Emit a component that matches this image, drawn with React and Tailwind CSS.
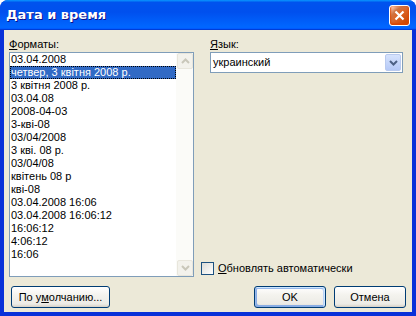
import React from 'react';

const formats = [
  '03.04.2008',
  'четвер, 3 квітня 2008 р.',
  '3 квітня 2008 р.',
  '03.04.08',
  '2008-04-03',
  '3-кві-08',
  '03/04/2008',
  '3 кві. 08 р.',
  '03/04/08',
  'квітень 08 р',
  'кві-08',
  '03.04.2008 16:06',
  '03.04.2008 16:06:12',
  '16:06:12',
  '4:06:12',
  '16:06',
];

// XP style push button
const XpButton = ({ children, primary, className = '' }) => (
  <button
    className={`h-[22px] rounded-[3px] border border-[#003c74] bg-[linear-gradient(to_bottom,#ffffff_0%,#f4f3ee_40%,#ecebe6_85%,#d6d0c5_100%)] text-black text-[11px] font-normal leading-none flex items-center justify-center ${
      primary ? 'shadow-[inset_-1px_1px_#cee7ff,inset_1px_2px_#98b8ea,inset_-2px_2px_#bcd4f6,inset_1px_-1px_#89ade4,inset_2px_-2px_#89ade4]' : ''
    } ${className}`}
  >
    {children}
  </button>
);

const ScrollBtn = ({ up }) => (
  <div className="w-[16px] h-[16px] rounded-[2px] border border-[#e8e6dc] bg-[#f3f2ec] flex items-center justify-center">
    <svg width="9" height="6" viewBox="0 0 9 6">
      <path
        d={up ? 'M1 5 L4.5 1.5 L8 5' : 'M1 1 L4.5 4.5 L8 1'}
        fill="none"
        stroke="#c9c7ba"
        strokeWidth="2"
      />
    </svg>
  </div>
);

export default function App() {
  return (
    <div className="w-[416px] h-[316px] flex flex-col rounded-t-[8px] overflow-hidden bg-[#0831d9] font-['Liberation_Sans',Arial,sans-serif] text-[11px] text-black">
      {/* TITLE BAR */}
      <div className="h-[30px] shrink-0 flex items-center pl-[6px] pr-[6px] bg-[linear-gradient(to_bottom,#0997ff_0%,#0053ee_8%,#0050ee_40%,#0066ff_88%,#0066ff_93%,#005bff_95%,#003dd7_96%,#003dd7_100%)]">
        <span className="text-white font-bold text-[13px] font-['DejaVu_Sans',sans-serif] [text-shadow:1px_1px_#0f1089] flex-1">Дата и время</span>
        <div className="w-[21px] h-[21px] rounded-[3px] border border-white bg-[radial-gradient(circle_at_90%_90%,#cc4600_0%,#dc6527_55%,#cd7546_70%,#ffccb2_90%,#ffffff_100%)] shadow-[inset_0_-1px_2px_1px_#da4600] flex items-center justify-center">
          <svg width="11" height="11" viewBox="0 0 11 11">
            <path d="M1.5 1.5 L9.5 9.5 M9.5 1.5 L1.5 9.5" stroke="white" strokeWidth="2.2" />
          </svg>
        </div>
      </div>

      {/* WINDOW FRAME */}
      <div className="flex-1 flex px-[4px] pb-[4px] bg-[#0831d9]">
        <div className="flex-1 flex flex-col bg-[#ece9d8] pt-[8px]">
          <div className="flex">
            {/* FORMATS */}
            <div className="ml-[5px] w-[185px] flex flex-col">
              <div className="h-[13px] leading-[13px]">
                <span className="underline">Ф</span>орматы:
              </div>
              <div className="mt-[1px] h-[225px] border border-[#7f9db9] bg-white flex">
                <div className="flex-1 flex flex-col">
                  {formats.map((f, i) => (
                    <div
                      key={f}
                      className={`h-[13px] leading-[13px] pl-[1px] whitespace-nowrap ${
                        i === 1 ? 'bg-[#316ac5] text-white outline-1 outline-dotted outline-[#000] -outline-offset-1' : ''
                      }`}
                    >
                      {f}
                    </div>
                  ))}
                </div>
                <div className="w-[17px] bg-[#fbfbf8] flex flex-col justify-between pl-[1px]">
                  <ScrollBtn up />
                  <ScrollBtn />
                </div>
              </div>
            </div>

            {/* LANGUAGE */}
            <div className="ml-[7px] w-[202px] flex flex-col">
              <div className="pl-[9px] h-[13px] leading-[13px]">
                <span className="underline">Я</span>зык:
              </div>
              <div className="ml-[9px] mt-[1px] h-[21px] border border-[#7f9db9] bg-white flex items-center pl-[2px] pr-[1px]">
                <span className="flex-1 text-[11px]">украинский</span>
                <div className="w-[16px] h-[17px] rounded-[2px] border border-[#b9caef] bg-[linear-gradient(to_bottom,#d6e3fd,#b5c9f7)] flex items-center justify-center">
                  <svg width="9" height="6" viewBox="0 0 9 6">
                    <path d="M1 1 L4.5 4.5 L8 1" fill="none" stroke="#4d6185" strokeWidth="2" />
                  </svg>
                </div>
              </div>
              <div className="flex-1" />
              <div className="flex items-center gap-[4px] mb-[2px]">
                <div className="w-[13px] h-[13px] border border-[#1c5180] bg-[linear-gradient(135deg,#dcdcd7,#ffffff)]" />
                <span className="leading-[13px]">
                  <span className="underline">О</span>бновлять автоматически
                </span>
              </div>
            </div>
          </div>

          {/* BUTTONS */}
          <div className="flex mt-[9px]">
            <XpButton className="ml-[7px] w-[99px]">
              По у<span className="underline">м</span>олчанию...
            </XpButton>
            <div className="flex-1" />
            <XpButton primary className="w-[72px]">OK</XpButton>
            <XpButton className="ml-[8px] mr-[6px] w-[72px]">Отмена</XpButton>
          </div>
        </div>
      </div>
    </div>
  );
}
